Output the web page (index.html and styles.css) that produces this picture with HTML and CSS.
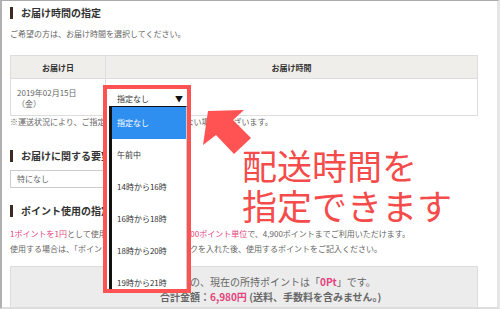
FILE: index.html
```html
<!DOCTYPE html>
<html lang="ja">
<head>
    <meta charset="UTF-8">
    <meta name="viewport" content="width=device-width, initial-scale=1.0">
    <title>お届け時間の指定</title>
    <link rel="stylesheet" href="styles.css">
</head>
<body>
    <div class="page">
        <h2 class="sec-title">お届け時間の指定</h2>
        <p class="lead">ご希望の方は、お届け時間を選択してください。</p>
        <table class="time-table">
            <thead>
                <tr>
                    <th class="col-date">お届け日</th>
                    <th>お届け時間</th>
                </tr>
            </thead>
            <tbody>
                <tr>
                    <td class="col-date">2019年02月15日<br>（金）</td>
                    <td></td>
                </tr>
            </tbody>
        </table>
        <p class="note">※運送状況により、ご指定の時間帯にお届けできない場合がございます。</p>

        <h2 class="sec-title">お届けに関する要望</h2>
        <div class="request-select">特になし</div>

        <h2 class="sec-title">ポイント使用の指定</h2>
        <p class="point-text"><span class="pink">1ポイントを1円</span>として使用できます。ご利用は、<span class="pink">100ポイント単位</span>で、4,900ポイントまでご利用いただけます。<br>使用する場合は、「ポイントを使用する」にチェックを入れた後、使用するポイントをご記入ください。</p>
        <div class="point-box">
            <p>お客様の、現在の所持ポイントは「<span class="pink bold">0Pt</span>」です。</p>
            <p class="bold">合計金額：<span class="pink">6,980円</span> (送料、手数料を含みません。)</p>
        </div>
    </div>

    <!-- annotation layer -->
    <div class="time-dropdown">
        <div class="current">指定なし<span class="caret">▼</span></div>
        <ul class="options">
            <li class="selected">指定なし</li>
            <li>午前中</li>
            <li>14時から16時</li>
            <li>16時から18時</li>
            <li>18時から20時</li>
            <li>19時から21時</li>
        </ul>
    </div>
    <svg class="arrow" width="500" height="309" viewBox="0 0 500 309">
        <polygon points="208,111 244,110 233,120 251,138 234,154 216,135 203,145" fill="#ff5252"/>
    </svg>
    <div class="callout">配送時間を<br>指定できます</div>
</body>
</html>
```

FILE: styles.css
```css
body {
    margin: 0;
    width: 500px;
    height: 309px;
    position: relative;
    overflow: hidden;
    background-color: #fff;
    font-family: "Noto Sans CJK JP", sans-serif;
    color: #666;
}
p, ul, h2 {
    margin: 0;
    padding: 0;
}
.page {
    height: 309px;
    box-sizing: border-box;
    border-top: 1px solid #aaa;
    border-left: 2px solid #b0b0b0;
    border-right: 3px solid #e6e6e6;
    border-bottom: 2px solid #ddd;
    padding: 0 19px 0 8px;
    overflow: hidden;
}
.sec-title {
    margin-top: 22px;
    border-left: 3px solid #3b2a20;
    padding-left: 8px;
    font-size: 10px;
    line-height: 12px;
    font-weight: bold;
    color: #333;
}
.sec-title:first-child {
    margin-top: 6px;
}
.lead {
    margin-top: 9px;
    font-size: 8px;
    line-height: 12px;
}
.time-table {
    margin-top: 15px;
    width: 468px;
    border-collapse: collapse;
    font-size: 8px;
}
.time-table th, .time-table td {
    border: 1px solid #ddd;
    padding: 0;
}
.time-table th {
    height: 22px;
    background-color: #f0eeea;
    color: #333;
    font-weight: bold;
}
.time-table td {
    height: 37px;
    vertical-align: top;
    line-height: 11px;
    padding: 8px 6px 0;
    box-sizing: border-box;
}
.time-table .col-date {
    width: 94px;
}
.note {
    font-size: 8px;
    line-height: 12px;
    white-space: nowrap;
}
.request-select {
    margin-top: 8px;
    width: 150px;
    height: 18px;
    box-sizing: border-box;
    border: 1px solid #ccc;
    padding-left: 6px;
    font-size: 8px;
    line-height: 16px;
}
.request-select + .sec-title {
    margin-top: 17px;
}
.point-text {
    margin-top: 9px;
    font-size: 8px;
    line-height: 15px;
    white-space: nowrap;
}
.pink { color: #e4427d; }
.bold { font-weight: bold; }
.point-box {
    margin-top: 10px;
    height: 60px;
    background-color: #ececec;
    border: 1px solid #ddd;
    padding: 7px 0 0 149px;
    font-size: 10px;
    line-height: 15px;
    white-space: nowrap;
}

/* annotation layer */
.time-dropdown {
    position: absolute;
    left: 103px;
    top: 85px;
    width: 88px;
    height: 208px;
    box-sizing: border-box;
    border: 4px solid #ff5252;
    background-color: #fff;
    font-size: 8px;
    color: #333;
}
.time-dropdown .current {
    position: relative;
    height: 17px;
    line-height: 19px;
    padding-left: 10px;
}
.time-dropdown .caret {
    position: absolute;
    right: 4px;
    top: 0;
    font-size: 8px;
    color: #111;
}
.options {
    list-style: none;
    margin-left: 2px;
    height: 183px;
    box-sizing: border-box;
    border-left: 3px solid #111;
    border-top: 1px solid #111;
    border-right: 1px solid #ccc;
    overflow: hidden;
}
.options li {
    height: 32px;
    line-height: 32px;
    padding-left: 5px;
}
.options li.selected {
    background-color: #2f8ff0;
    color: #fff;
}
.arrow {
    position: absolute;
    left: 0;
    top: 0;
}
.callout {
    position: absolute;
    left: 242px;
    top: 145px;
    font-size: 35px;
    line-height: 40px;
    color: #f54b4b;
    white-space: nowrap;
}
```
